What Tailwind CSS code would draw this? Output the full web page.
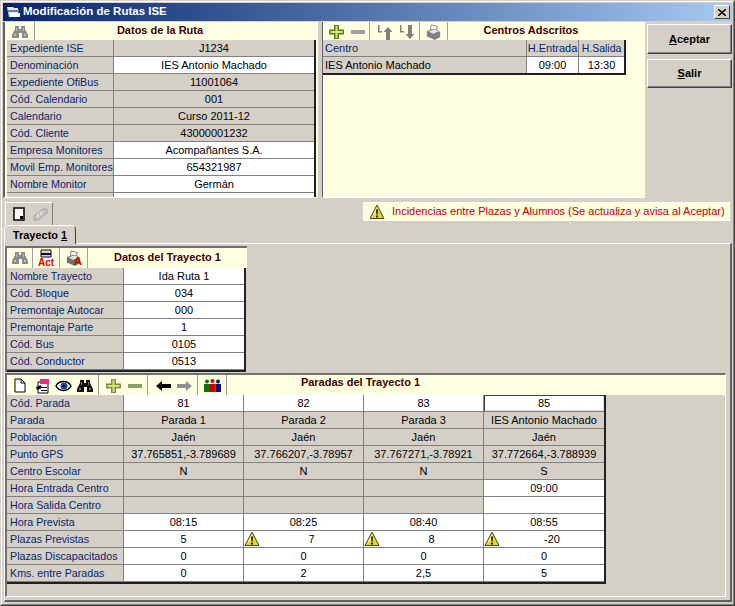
<!DOCTYPE html>
<html lang="es">
<head>
  <meta charset="UTF-8" />
  <title>Modificación de Rutas ISE</title>
  <script src="https://cdn.jsdelivr.net/npm/@tailwindcss/browser@4"></script>
</head>
<body class="bg-[#d4d0c8] font-['Liberation_Sans',Arial,sans-serif] text-[11px] leading-none text-black">

<!-- shared icons -->
<svg width="0" height="0" class="absolute">
  <defs>
    <symbol id="binoc" viewBox="0 0 16 14">
      <path fill="currentColor" d="M3 1h4v3h2V1h4v3l3 6v3h-6V8H7v5H0v-3l3-6z"/>
      <path fill="#fff" opacity=".45" d="M4 3h1v3H4zM11 3h1v3h-1zM2 9h2v2H2zM12 9h2v2h-2z"/>
    </symbol>
    <symbol id="plus" viewBox="0 0 15 14">
      <path fill="currentColor" d="M5 0h5v4.500h5v5h-5V14H5V9.500H0v-5h5z"/>
      <path fill="#d8e070" d="M6.500 1h2v5h5v2h-5v5h-2V8h-5V6h5z"/>
    </symbol>
    <symbol id="warn" viewBox="0 0 16 16">
      <path fill="#9a9a90" d="M2 15h13l-1-2H3z"/>
      <path fill="#e0d830" stroke="#4a4a20" d="M8 1l7 13.500H1z"/>
      <path fill="#f8f8a0" d="M8 3l-4 8h2z"/>
      <path fill="#222" d="M7 5.500h2l-.4 5h-1.200zM7 11.500h2v2H7z"/>
    </symbol>
    <symbol id="printer" viewBox="0 0 17 18">
      <path fill="#fff" stroke="currentColor" d="M6 1l7 2-2 5-6-2z"/>
      <path fill="currentColor" d="M1 8l9-3 6 4v6l-6 3-9-4z"/>
      <path fill="#e8e8e8" d="M3 8.500l7-2.500 4 2.500-6 2.500z"/>
    </symbol>
  </defs>
</svg>

<div class="w-[735px] h-[606px] border border-t-[#d4d0c8] border-l-[#d4d0c8] border-r-[#404040] border-b-[#404040] overflow-hidden">
<div class="h-full border border-t-white border-l-white border-r-[#808080] border-b-[#808080] p-px flex flex-col">

  <!-- Title bar -->
  <div class="h-[18px] shrink-0 flex items-center bg-linear-to-r from-[#0a246a] to-[#a6caf0] pl-[3px] pr-[2px]">
    <svg width="15" height="14" viewBox="0 0 15 14" class="mr-[2px]">
      <path fill="#e8e8e8" d="M1 2h6l1 1h4v9H3z"/>
      <path fill="#5a8aa0" d="M2 5h11v2H2z"/>
      <path fill="#fff" d="M4 8h10v4H4z"/>
      <path fill="#000" d="M1 1h5v1H1zM13 12h1v1h-1z"/>
    </svg>
    <span class="text-white font-bold text-[11.5px]">Modificación de Rutas ISE</span>
    <div class="ml-auto w-4 h-[14px] bg-[#d4d0c8] border border-t-white border-l-white border-r-[#404040] border-b-[#404040] flex items-center justify-center">
      <svg width="8" height="7" viewBox="0 0 8 7"><path d="M0 0l8 7M8 0L0 7" stroke="#000" stroke-width="1.500"/></svg>
    </div>
  </div>

  <!-- Top area -->
  <div class="flex h-[176px] shrink-0 mt-px">
    <!-- Datos de la Ruta -->
    <div class="w-[315px] h-full bg-[#ffffe1] border-l-2 border-l-[#606060] border-b border-b-white overflow-hidden">
      <div class="h-[18px] flex items-start">
        <div class="w-[30px] h-full border-r border-[#a0a0a0] flex justify-center pt-[3px] text-[#8a8a8a]">
          <svg width="16" height="14"><use href="#binoc"/></svg>
        </div>
        <div class="w-[250px] text-center font-bold text-[#400000] pt-[3px]">Datos de la Ruta</div>
      </div>
      <div id="rutaGrid" class="ml-[2px] w-fit border-r-2 border-[#202020]"></div>
    </div>

    <!-- Centros Adscritos -->
    <div class="w-[323px] h-full ml-[4px] bg-[#ffffe1] border-l border-l-[#606060] border-b border-b-white overflow-hidden">
      <div class="h-[18px] flex items-start">
        <div class="w-[47px] h-full border-r border-[#a0a0a0] flex items-center gap-[7px] pl-[6px] pt-[2px]">
          <svg width="15" height="14" class="text-[#55851a]"><use href="#plus"/></svg>
          <div class="w-[14px] h-[4px] bg-[#a0a0a0]"></div>
        </div>
        <div class="w-[50px] h-full border-r border-[#a0a0a0] flex items-center gap-2 pl-[8px] pt-[2px]">
          <svg width="14" height="15" viewBox="0 0 14 15"><path fill="#808080" d="M0 0h1.500v6H4v1.500H0zM10 2l4.500 5H12v8H8V7H5.500z"/></svg>
          <svg width="14" height="15" viewBox="0 0 14 15"><path fill="#808080" d="M0 0h1.500v6H4v1.500H0zM8 0h4v9h2.500L10 14 5.500 9H8z"/></svg>
        </div>
        <div class="w-[28px] h-full border-r border-[#a0a0a0] flex items-center justify-center pt-[2px] text-[#808080]">
          <svg width="17" height="16"><use href="#printer"/></svg>
        </div>
        <div class="w-[166px] text-center font-bold text-[#400000] pt-[3px]">Centros Adscritos</div>
      </div>
      <div class="w-fit border-r-2 border-b-2 border-[#202020]">
        <div class="flex h-[17px] items-center border-b border-[#808080] text-[#0a246a] bg-[#d4d0c8]">
          <div class="w-[204px] h-full flex items-center pl-[2px] border-r border-[#808080]">Centro</div>
          <div class="w-[52px] h-full flex items-center justify-center border-r border-[#808080]">H.Entrada</div>
          <div class="w-[45px] h-full flex items-center justify-center text-[10.5px]">H.Salida</div>
        </div>
        <div class="flex h-[16px] items-center">
          <div class="w-[204px] h-full flex items-center pl-[2px] border-r border-[#808080] bg-[#d4d0c8]">IES Antonio Machado</div>
          <div class="w-[52px] h-full flex items-center justify-center border-r border-[#808080] bg-white">09:00</div>
          <div class="w-[45px] h-full flex items-center justify-center bg-white">13:30</div>
        </div>
      </div>
    </div>

    <!-- Botones -->
    <div class="w-[85px] ml-[2px] pt-[2px] flex flex-col gap-[5px]">
      <div class="h-[30px] flex items-center justify-center font-bold border border-t-white border-l-white border-r-[#404040] border-b-[#404040] shadow-[inset_-1px_-1px_0_#808080]"><span><u>A</u>ceptar</span></div>
      <div class="h-[29px] flex items-center justify-center font-bold border border-t-white border-l-white border-r-[#404040] border-b-[#404040] shadow-[inset_-1px_-1px_0_#808080]"><span><u>S</u>alir</span></div>
    </div>
  </div>

  <!-- Toolbar + aviso -->
  <div class="h-[27px] shrink-0 flex items-start pl-[2px] pr-[2px] pt-[4px]">
    <div class="w-[48px] h-[23px] border-t border-l border-white border-r border-r-[#808080] flex items-center gap-[8px] pl-[7px]">
      <svg width="12" height="14" viewBox="0 0 12 14"><path fill="#fff" stroke="#000" stroke-width="1.500" d="M1 1h10v12H1z"/><path fill="#000" d="M7 9h3v3H7z"/></svg>
      <svg width="15" height="13" viewBox="0 0 15 13"><path fill="#c4c4c4" stroke="#a0a0a0" d="M1 12V8l9-7h4v4l-9 7z"/><path stroke="#eee" d="M5 5.500v4M8 3v4"/></svg>
    </div>
    <div class="ml-auto w-[367px] h-[19px] bg-[#ffffe1] flex items-center text-[#c00000] whitespace-nowrap">
      <svg width="16" height="16" class="ml-[6px] mr-[7px]"><use href="#warn"/></svg>
      <span>Incidencias entre Plazas y Alumnos (Se actualiza y avisa al Aceptar)</span>
    </div>
  </div>

  <!-- Tab -->
  <div class="h-[18px] shrink-0 pl-px">
    <div class="relative z-10 w-[72px] h-[19px] bg-[#d4d0c8] border-t border-l border-white border-r border-r-[#404040] rounded-t-[5px] flex items-center justify-center font-bold"><span>Trayecto <u>1</u></span></div>
  </div>

  <!-- Tab page -->
  <div class="h-[359px] shrink-0 ml-px border-t border-l border-white border-r-2 border-r-[#606060] border-b-2 border-b-[#606060] pt-[2px]">

    <!-- Datos del Trayecto -->
    <div class="w-[242px] h-[126px] border-t-2 border-l-2 border-[#707070]">
      <div class="h-[20px] bg-[#ffffe1] flex items-start">
        <div class="w-[26px] h-full border-r border-[#a0a0a0] flex justify-center pt-[3px] text-[#8a8a8a]">
          <svg width="16" height="14"><use href="#binoc"/></svg>
        </div>
        <div class="w-[27px] h-full border-r border-[#a0a0a0] flex justify-center pt-[1px]">
          <svg width="18" height="18" viewBox="0 0 18 18">
            <path fill="#f0e060" stroke="#000080" d="M4 1h10v7H4z"/>
            <path fill="#000080" d="M4 4h10v2H4z"/>
            <text x="9" y="17" text-anchor="middle" font-size="10" font-weight="bold" fill="#e00000" font-family="Liberation Sans">Act</text>
          </svg>
        </div>
        <div class="w-[28px] h-full border-r border-[#a0a0a0] flex items-center justify-center">
          <svg width="17" height="16" class="text-[#707070]"><use href="#printer"/></svg>
          <span class="-ml-[8px] mt-[6px] text-[11px] font-bold text-[#e00000]">A</span>
        </div>
        <div class="flex-1 text-center font-bold text-[#400000] pt-[4px]">Datos del Trayecto 1</div>
      </div>
      <div id="trayectoGrid" class="w-fit border-r-2 border-b-2 border-[#202020]"></div>
    </div>

    <!-- Paradas del Trayecto -->
    <div class="w-[721px] h-[224px] mt-px border-t-2 border-l-2 border-[#707070] border-r border-r-white border-b border-b-white">
      <div class="h-[20px] bg-[#ffffe1] flex items-start">
        <div class="w-[92px] h-full border-r border-[#a0a0a0] flex items-center pl-[7px] pt-[1px]">
          <svg width="12" height="15" viewBox="0 0 12 15"><path fill="#fff" stroke="#000" d="M1 1h6l4 4v9H1zM7 1v4h4"/></svg>
          <svg width="15" height="16" viewBox="0 0 15 16" class="ml-[9px]">
            <path fill="#fff" stroke="#000" d="M3 4h10v11H3z"/>
            <path fill="#e03080" d="M5 1h9v5H5z"/>
            <path fill="#000" d="M1 9l5-2 1 3-5 2zM6 9h6v1H6zM6 12h6v1H6z"/>
          </svg>
          <svg width="17" height="14" viewBox="0 0 17 14" class="ml-[5px]">
            <path fill="#fff" stroke="#000" stroke-width="1.500" d="M1 7c3-6 12-6 15 0-3 6-12 6-15 0z"/>
            <circle cx="9" cy="7" r="3.500" fill="#2040a0"/>
            <circle cx="9" cy="7" r="1.200" fill="#000"/>
          </svg>
          <svg width="16" height="14" class="ml-[5px] text-[#101010]"><use href="#binoc"/></svg>
        </div>
        <div class="w-[49px] h-full border-r border-[#a0a0a0] flex items-center gap-[7px] pl-[7px] pt-[1px]">
          <svg width="15" height="14" class="text-[#75904a]"><use href="#plus"/></svg>
          <div class="w-[14px] h-[4px] bg-[#8aa060]"></div>
        </div>
        <div class="w-[50px] h-full border-r border-[#a0a0a0] flex items-center gap-[6px] pl-[8px] pt-[1px]">
          <svg width="15" height="10" viewBox="0 0 15 10"><path fill="#000" d="M0 5l6-5v3h9v4H6v3z"/></svg>
          <svg width="15" height="10" viewBox="0 0 15 10"><path fill="#909090" d="M15 5L9 0v3H0v4h9v3z"/></svg>
        </div>
        <div class="w-[29px] h-full border-r border-[#a0a0a0] flex items-center justify-center pt-[1px]">
          <svg width="17" height="13" viewBox="0 0 17 13">
            <circle cx="3" cy="2.500" r="2" fill="#107010"/><path fill="#107010" d="M0 5h6v8H0z"/>
            <circle cx="8.500" cy="2" r="2" fill="#d00000"/><path fill="#d00000" d="M5.500 5h6v8h-6z"/>
            <circle cx="14" cy="2.500" r="2" fill="#101070"/><path fill="#101070" d="M11.500 5H17v8h-5.500z"/>
          </svg>
        </div>
        <div class="w-[267px] text-center font-bold text-[#400000] pt-[2px]">Paradas del Trayecto 1</div>
      </div>
      <div id="paradasGrid" class="w-fit border-r-2 border-b-2 border-[#202020]"></div>
    </div>
  </div>
</div>
</div>

<script>
  const warnIcon = '<svg width="16" height="16" class="shrink-0 -mt-px"><use href="#warn"/></svg>';

  // one grid row: label cell + value cells
  function row(label, labelW, cells, cellW) {
    let html = `<div class="flex h-[17px] border-b border-[#808080]">`;
    html += `<div style="width:${labelW}px" class="h-full flex items-center pl-[3px] bg-[#d4d0c8] text-[#0a246a] text-[10.7px] border-r border-[#808080] whitespace-nowrap">${label}</div>`;
    cells.forEach((c, i) => {
      const bg = c.g ? "bg-[#d4d0c8]" : "bg-white";
      const line = i < cells.length - 1 ? "border-r border-[#808080]" : "";
      const sel = c.sel ? "shadow-[inset_1px_1px_0_#404040,inset_-1px_-1px_0_#e0e0e0]" : "";
      const body = c.warn ? `${warnIcon}<span class="flex-1 text-center">${c.t}</span>` : `<span class="flex-1 text-center">${c.t}</span>`;
      html += `<div style="width:${cellW}px" class="h-full flex items-center whitespace-nowrap ${bg} ${line} ${sel}">${body}</div>`;
    });
    return html + "</div>";
  }

  const g = t => ({ t, g: true });
  const w = t => ({ t });
  const a = t => ({ t, warn: true });

  const ruta = [
    ["Expediente ISE", g("J1234")], ["Denominación", w("IES Antonio Machado")],
    ["Expediente OfiBus", g("11001064")], ["Cód. Calendario", g("001")],
    ["Calendario", g("Curso 2011-12")], ["Cód. Cliente", g("43000001232")],
    ["Empresa Monitores", w("Acompañantes S.A.")], ["Movil Emp. Monitores", w("654321987")],
    ["Nombre Monitor", w("Germán")], ["", w("")]
  ];
  document.getElementById("rutaGrid").innerHTML = ruta.map(r => row(r[0], 107, [r[1]], 200)).join("");

  const trayecto = [
    ["Nombre Trayecto", "Ida Ruta 1"], ["Cód. Bloque", "034"], ["Premontaje Autocar", "000"],
    ["Premontaje Parte", "1"], ["Cód. Bus", "0105"], ["Cód. Conductor", "0513"]
  ];
  document.getElementById("trayectoGrid").innerHTML = trayecto.map(r => row(r[0], 117, [w(r[1])], 120)).join("");

  const paradas = [
    ["Cód. Parada", [w("81"), w("82"), w("83"), { t: "85", sel: true }]],
    ["Parada", [g("Parada 1"), g("Parada 2"), g("Parada 3"), g("IES Antonio Machado")]],
    ["Población", [g("Jaén"), g("Jaén"), g("Jaén"), g("Jaén")]],
    ["Punto GPS", [g("37.765851,-3.789689"), g("37.766207,-3.78957"), g("37.767271,-3.78921"), g("37.772664,-3.788939")]],
    ["Centro Escolar", [g("N"), g("N"), g("N"), g("S")]],
    ["Hora Entrada Centro", [g(""), g(""), g(""), w("09:00")]],
    ["Hora Salida Centro", [g(""), g(""), g(""), w("")]],
    ["Hora Prevista", [w("08:15"), w("08:25"), w("08:40"), w("08:55")]],
    ["Plazas Previstas", [w("5"), a("7"), a("8"), a("-20")]],
    ["Plazas Discapacitados", [w("0"), w("0"), w("0"), w("0")]],
    ["Kms. entre Paradas", [w("0"), w("2"), w("2,5"), w("5")]]
  ];
  document.getElementById("paradasGrid").innerHTML = paradas.map(r => row(r[0], 117, r[1], 120)).join("");
</script>
</body>
</html>
